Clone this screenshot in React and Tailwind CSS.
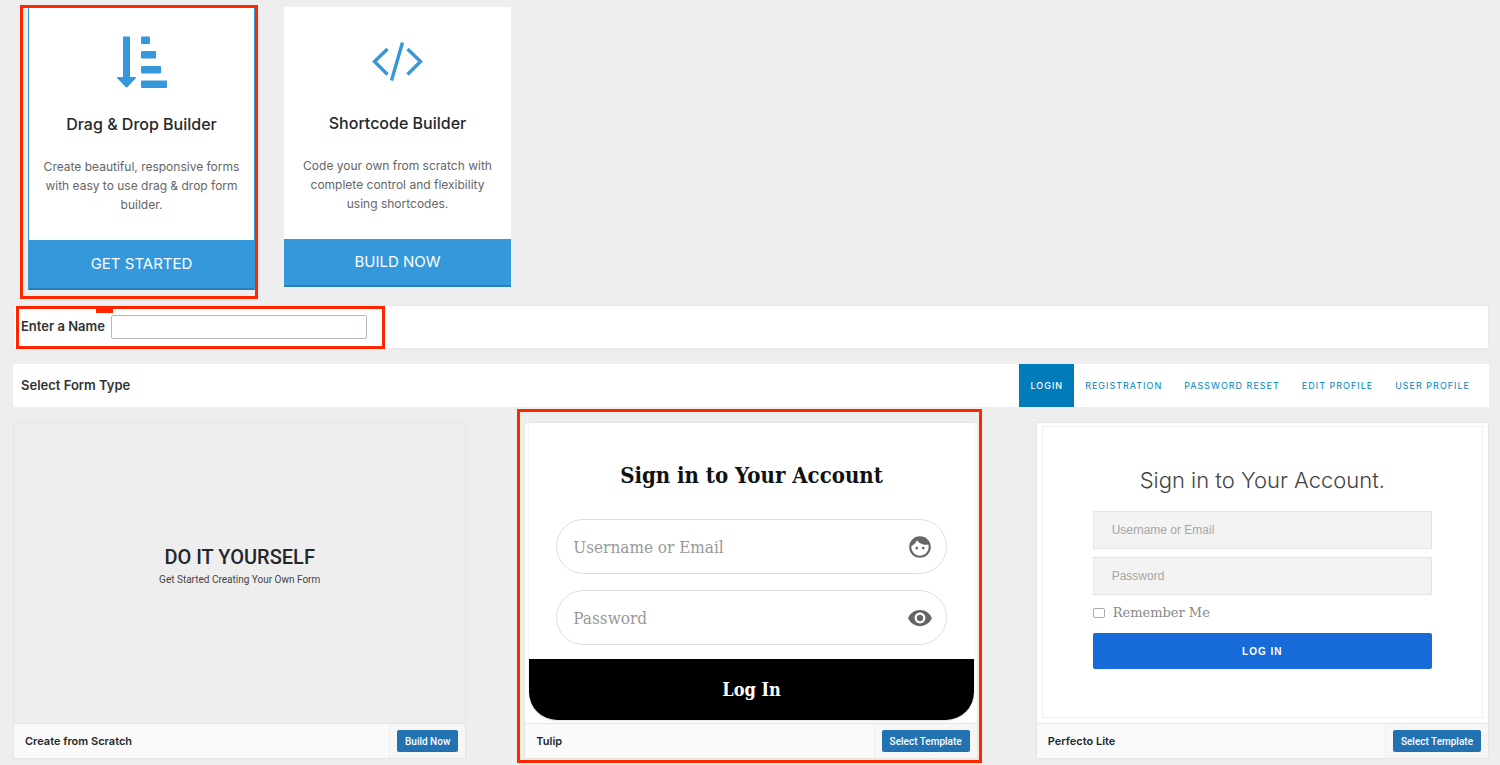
import React, { useState } from 'react';
import { MdVisibility } from 'react-icons/md';

const formTypes = ['Login', 'Registration', 'Password Reset', 'Edit Profile', 'User Profile'];

const SortIcon = () => (
  <svg viewBox="0 0 52 54" className="w-[52px] h-[54px]" fill="#3498db">
    <path d="M8 1.5h5a1 1 0 0 1 1 1V42h5.2c.8 0 1 .6.5 1.2l-8.500 9c-.4.4-1 .4-1.400 0l-8.500-9c-.5-.6-.3-1.200.5-1.200H7V2.500a1 1 0 0 1 1-1z" />
    <rect x="25" y="1.500" width="9" height="7.500" rx="1" />
    <rect x="25" y="16" width="15" height="7.500" rx="1" />
    <rect x="25" y="31" width="20" height="7.500" rx="1" />
    <rect x="25" y="45.500" width="26" height="7.500" rx="1" />
  </svg>
);

const CodeIcon = () => (
  <svg viewBox="0 0 52 54" className="w-[52px] h-[54px]" fill="none" stroke="#3498db" strokeWidth="3.400">
    <path d="M15.500 15 2.500 27.500 15.500 40.500" />
    <path d="M35.500 15 48.500 27.500 35.500 40.500" />
    <path d="M30.500 8.500 19.500 46.500" />
  </svg>
);

const FaceIcon = () => (
  <svg viewBox="0 0 24 24" className="w-[26px] h-[26px]" fill="currentColor">
    <path d="M9 11.75c-.69 0-1.250.56-1.250 1.250s.56 1.250 1.250 1.250 1.250-.56 1.250-1.250-.56-1.250-1.250-1.250zm6 0c-.69 0-1.250.56-1.250 1.250s.56 1.250 1.250 1.250 1.250-.56 1.250-1.250-.56-1.250-1.250-1.250zM12 2C6.480 2 2 6.480 2 12s4.480 10 10 10 10-4.480 10-10S17.520 2 12 2zm0 18c-4.410 0-8-3.590-8-8 0-.29.02-.58.05-.86 2.360-1.050 4.230-2.980 5.210-5.370C11.070 8.330 14.050 10 17.420 10c.78 0 1.530-.09 2.250-.26.21.71.33 1.470.33 2.260 0 4.410-3.590 8-8 8z" />
  </svg>
);

// red marker box drawn over a highlighted area
const Marker = ({ className }) => (
  <div className={`absolute border-3 border-[#ff2600] pointer-events-none ${className}`}></div>
);

const BuilderCard = ({ icon, title, text, action, active, children }) => (
  <div className={`relative w-[227px] flex flex-col bg-white text-center ${active ? 'border-x border-[#3498db]' : ''}`}>
    <div className={`flex flex-col items-center px-3 ${active ? 'h-[233px] pt-7' : 'h-[232px] pt-[27px]'}`}>
      {icon}
      <h3 className="mt-[23px] text-base leading-6 font-medium text-[#23282d] whitespace-nowrap">{title}</h3>
      <p className="mt-[21px] text-xs leading-[19px] text-[#666]">{text}</p>
    </div>
    <button
      type="button"
      className={`bg-[#3498db] border-b-2 border-[#2980b9] text-white text-[15px] uppercase ${active ? 'h-[50px]' : 'h-12'}`}
    >
      {action}
    </button>
    {children}
  </div>
);

const TemplateCard = ({ title, action, plain, children, marker }) => (
  <article className={`relative flex flex-col border border-[#e5e5e5] ${plain ? 'bg-[#eee]' : 'bg-white'}`}>
    <div className="h-[300px] flex flex-col">{children}</div>
    <footer className="h-[35px] flex items-stretch border-t border-[#e5e5e5] bg-[#fafafa]">
      <h4 className="flex-1 flex items-center pl-[11px] text-[11px] font-semibold text-[#23282d]">{title}</h4>
      <div className="flex items-center px-[7px] border-l border-[#eee] bg-[#f7f7f7]">
        <button type="button" className="h-[22px] px-2 rounded-xs bg-[#2271b1] text-white text-[10px] font-medium font-['Roboto',sans-serif]">
          {action}
        </button>
      </div>
    </footer>
    {marker}
  </article>
);

const TulipField = ({ label, type, icon }) => (
  <div className="h-[55px] flex items-center rounded-full border border-[#ddd] pl-4 pr-[13px]">
    <input
      aria-label={label}
      type={type}
      placeholder={label}
      className="flex-1 min-w-0 h-8 bg-transparent outline-none text-[17px] font-['DejaVu_Serif_Condensed','DejaVu_Serif',serif] placeholder:text-[#999]"
    />
    <span className="text-[#666] text-[26px]">{icon}</span>
  </div>
);

const PerfectoField = ({ label, type }) => (
  <input
    aria-label={label}
    type={type}
    placeholder={label}
    className="h-[38px] w-full px-[18px] bg-[#f3f3f3] border border-[#e4e4e4] outline-none text-xs font-['Liberation_Sans',sans-serif] placeholder:text-[#a6a6a6]"
  />
);

const App = () => {
  const [formType, setFormType] = useState('Login');
  const [name, setName] = useState('');

  return (
    <div className="min-h-screen bg-[#eee] pl-[13px] pr-[11px] pt-[7px] pb-[7px] font-['Inter',sans-serif]">
      <section className="flex items-start gap-[29px] pl-[15px] h-[298px]">
        <BuilderCard
          active
          icon={<SortIcon />}
          title="Drag & Drop Builder"
          text="Create beautiful, responsive forms with easy to use drag & drop form builder."
          action="Get Started"
        >
          <Marker className="-top-0.5 -bottom-[9px] -left-[9px] -right-1" />
        </BuilderCard>
        <BuilderCard
          icon={<CodeIcon />}
          title="Shortcode Builder"
          text="Code your own from scratch with complete control and flexibility using shortcodes."
          action="Build Now"
        />
      </section>

      <section className="h-11 flex items-center bg-white border border-[#e8e8e8]">
        <div className="relative h-[43px] w-[371px] flex items-center gap-1.5 pl-[7px]">
          <label htmlFor="form-name" className="text-[13px] font-semibold text-[#333] whitespace-nowrap">Enter a Name</label>
          <input
            id="form-name"
            type="text"
            value={name}
            onChange={e => setName(e.target.value)}
            className="w-64 h-6 px-2 rounded-xs border border-[#b4b9be] bg-white text-xs outline-none"
          />
          <Marker className="inset-y-0 left-0.5 right-0" />
          <div className="absolute top-0 left-[82px] w-[17px] h-[7px] bg-[#ff2600]"></div>
        </div>
      </section>

      <section className="mt-[15px] h-[43px] flex items-center justify-between bg-white pl-2 pr-2">
        <h2 className="text-[13px] font-semibold text-[#333]">Select Form Type</h2>
        <nav className="h-full flex">
          {formTypes.map(type => (
            <button
              key={type}
              type="button"
              onClick={() => setFormType(type)}
              className={`px-[11px] text-[9px] uppercase tracking-[1px] ${formType === type ? 'bg-[#007cba] text-white font-medium' : 'text-[#0085ba]'}`}
            >
              {type}
            </button>
          ))}
        </nav>
      </section>

      <section className="mt-[15px] grid grid-cols-3 gap-x-[58px]">
        <TemplateCard plain title="Create from Scratch" action="Build Now">
          <div className="flex-1 flex flex-col items-center pt-[120px] font-['Roboto',sans-serif]">
            <h3 className="text-xl leading-7 font-medium text-[#23282d]">DO IT YOURSELF</h3>
            <p className="text-[10px] leading-[18px] text-[#444]">Get Started Creating Your Own Form</p>
          </div>
        </TemplateCard>

        <TemplateCard
          title="Tulip"
          action="Select Template"
          marker={<Marker className="-top-3.5 -bottom-[5px] -left-2 -right-[5px]" />}
        >
          <form
            onSubmit={e => e.preventDefault()}
            className="ml-1 mr-[3px] h-[297px] flex flex-col rounded-b-[28px] overflow-hidden font-['DejaVu_Serif_Condensed','DejaVu_Serif',serif] shadow-sm"
          >
            <h3 className="pt-9 text-center text-[22px] leading-8 font-bold text-[#111]">Sign in to Your Account</h3>
            <div className="mt-7 px-[27px] flex flex-col gap-4">
              <TulipField label="Username or Email" type="text" icon={<FaceIcon />} />
              <TulipField label="Password" type="password" icon={<MdVisibility />} />
            </div>
            <button type="submit" className="mt-auto h-[61px] bg-black text-white text-lg font-bold">Log In</button>
          </form>
        </TemplateCard>

        <TemplateCard title="Perfecto Lite" action="Select Template">
          <form
            onSubmit={e => e.preventDefault()}
            className="mx-[5px] mt-[3px] h-[292px] px-[50px] flex flex-col border border-[#eee]"
          >
            <h3 className="pt-[39px] text-center text-[22px] leading-7 font-light text-[#444] whitespace-nowrap">Sign in to Your Account.</h3>
            <div className="mt-[17px] flex flex-col gap-2">
              <PerfectoField label="Username or Email" type="text" />
              <PerfectoField label="Password" type="password" />
            </div>
            <div className="mt-2 h-5 flex items-center gap-2">
              <input
                id="perfecto-remember"
                type="checkbox"
                className="appearance-none w-3 h-2.5 rounded-xs border border-[#aaa] bg-white"
              />
              <label htmlFor="perfecto-remember" className="text-[13px] text-[#888] font-['DejaVu_Serif',serif]">Remember Me</label>
            </div>
            <button
              type="submit"
              className="mt-2.5 h-9 rounded-xs bg-[#176bd8] text-white text-[10px] font-bold tracking-[1px] font-['Liberation_Sans',sans-serif]"
            >
              LOG IN
            </button>
          </form>
        </TemplateCard>
      </section>
    </div>
  );
};

export default App;
